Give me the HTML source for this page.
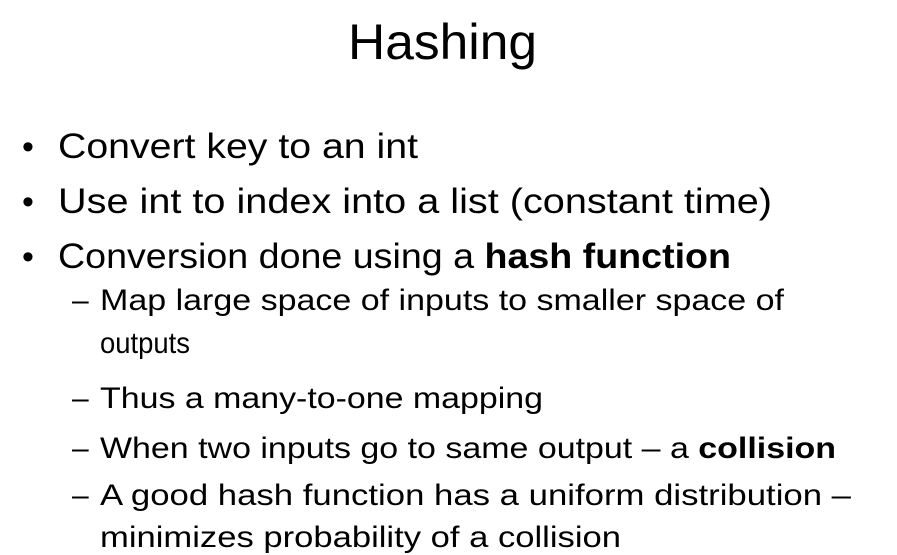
<!DOCTYPE html>
<html><head><meta charset="utf-8"><style>
html,body{margin:0;padding:0;background:#fff;width:897px;height:555px;overflow:hidden}
svg{display:block}
text{font-family:"Liberation Sans",sans-serif;fill:#000}
</style></head><body>
<svg width="897" height="555" viewBox="0 0 897 555">
<text x="348" y="59" font-size="50" textLength="189" lengthAdjust="spacingAndGlyphs">Hashing</text>

<text x="22" y="158" font-size="34">•</text>
<text x="58" y="158" font-size="35" textLength="360" lengthAdjust="spacingAndGlyphs">Convert key to an int</text>
<text x="22" y="213" font-size="34">•</text>
<text x="58" y="213" font-size="35" textLength="714" lengthAdjust="spacingAndGlyphs">Use int to index into a list (constant time)</text>
<text x="22" y="268" font-size="34">•</text>
<text x="58" y="268" font-size="35" textLength="673" lengthAdjust="spacingAndGlyphs">Conversion done using a <tspan font-weight="bold">hash function</tspan></text>

<text x="72" y="310" font-size="30">–</text>
<text x="100" y="310" font-size="30" textLength="684" lengthAdjust="spacingAndGlyphs">Map large space of inputs to smaller space of</text>
<text x="100" y="353" font-size="30" textLength="90" lengthAdjust="spacingAndGlyphs">outputs</text>
<text x="72" y="408" font-size="30">–</text>
<text x="100" y="408" font-size="30" textLength="443" lengthAdjust="spacingAndGlyphs">Thus a many-to-one mapping</text>
<text x="72" y="458" font-size="30">–</text>
<text x="100" y="458" font-size="30" textLength="736" lengthAdjust="spacingAndGlyphs">When two inputs go to same output – a <tspan font-weight="bold">collision</tspan></text>
<text x="72" y="505" font-size="30">–</text>
<text x="100" y="505" font-size="30" textLength="751" lengthAdjust="spacingAndGlyphs">A good hash function has a uniform distribution –</text>
<text x="100" y="547" font-size="30" textLength="521" lengthAdjust="spacingAndGlyphs">minimizes probability of a collision</text>
</svg>
</body></html>
